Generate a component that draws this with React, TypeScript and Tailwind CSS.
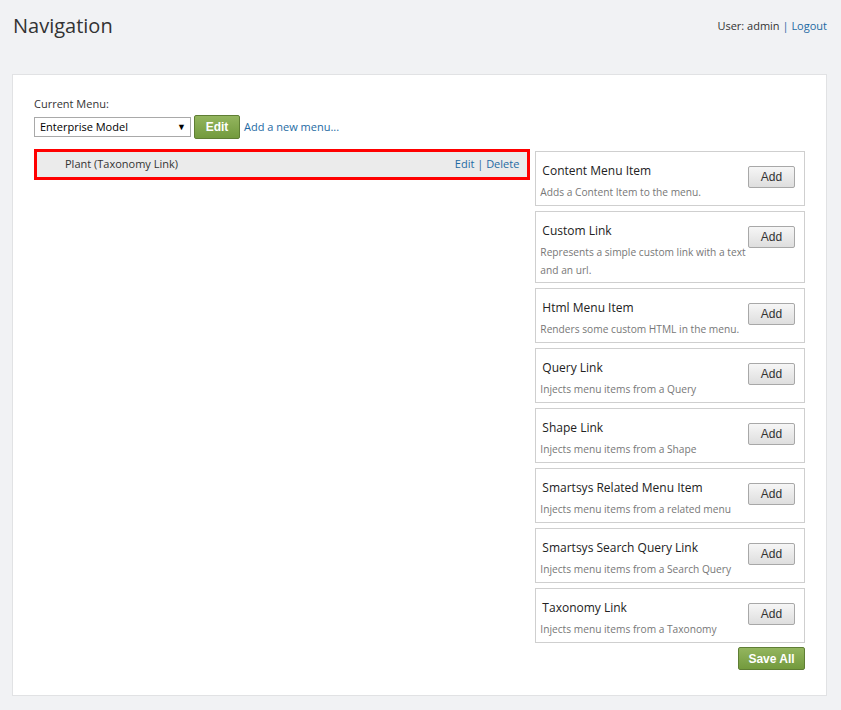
import React from "react";

const items = [
  { t: "Content Menu Item", d: "Adds a Content Item to the menu." },
  { t: "Custom Link", d: "Represents a simple custom link with a text and an url." },
  { t: "Html Menu Item", d: "Renders some custom HTML in the menu." },
  { t: "Query Link", d: "Injects menu items from a Query" },
  { t: "Shape Link", d: "Injects menu items from a Shape" },
  { t: "Smartsys Related Menu Item", d: "Injects menu items from a related menu" },
  { t: "Smartsys Search Query Link", d: "Injects menu items from a Search Query" },
  { t: "Taxonomy Link", d: "Injects menu items from a Taxonomy" },
];

export default function App() {
  return (
    <div className="w-[841px] h-[710px] bg-[#f1f2f4] text-[#333] overflow-hidden" style={{ fontFamily: '"Open Sans", "Noto Sans", sans-serif' }}>
      <div className="flex justify-between items-start pl-[13px] pr-[14px] pt-[11px] h-[74px]">
        <h1 className="text-[20px] leading-[30px] text-[#333]">Navigation</h1>
        <div className="text-[11px] mt-[7px] leading-[16px]">
          User: admin <span className="text-[#1e6aa3]">|</span> <span className="text-[#1e6aa3]">Logout</span>
        </div>
      </div>
      <div className="mx-[12px] mr-[14px] h-[622px] bg-white border border-[#e1e2e4] pl-[21px] pr-[21px] pt-[21px]">
        <div className="text-[11px] leading-[16px] text-[#333]">Current Menu:</div>
        <div className="flex items-center mt-[3px] h-[24px]">
          <div className="w-[157px] h-[20px] border border-[#a9a9a9] flex items-center justify-between pl-[5px] pr-[4px] text-[11px] text-black">
            <span>Enterprise Model</span>
            <span className="text-[9px]">▼</span>
          </div>
          <div className="ml-[3px] w-[46px] h-[24px] rounded-[2px] border border-[#5f7e34] bg-gradient-to-b from-[#93b55e] to-[#739a3d] text-white text-[12px] font-bold flex items-center justify-center" style={{ fontFamily: '"Liberation Sans", Arial, sans-serif' }}>Edit</div>
          <span className="ml-[4px] text-[11px] text-[#1e6aa3]">Add a new menu...</span>
        </div>
        <div className="flex mt-[10px] gap-[5px]">
          <div className="w-[497px]">
            <div className="h-[31px] border-[3px] border-[#ff0000] bg-[#ebebeb] flex items-center justify-between pl-[28px] pr-[8px] text-[11px]">
              <span className="text-[#333]">Plant (Taxonomy Link)</span>
              <span className="text-[#1e6aa3]">Edit <span>|</span> Delete</span>
            </div>
          </div>
          <div className="w-[270px] mt-[2px] flex flex-col gap-[5px]">
            {items.map((it) => (
              <div key={it.t} className="border border-[#cfcfcf] bg-white flex justify-between pl-[4px] pr-[9px] pt-[9px] pb-[3px] min-h-[55px]">
                <div className="flex-1 pr-[1px]">
                  <div className="text-[12px] leading-[20px] text-[#222] pl-[2px]">{it.t}</div>
                  <div className="text-[10.2px] leading-[18px] text-[#777] mt-[2px]">{it.d}</div>
                </div>
                <div className="pt-[5px] shrink-0">
                  <div className="w-[47px] h-[22px] border border-[#a8a8a8] rounded-[2px] bg-gradient-to-b from-[#f6f6f6] to-[#dedede] text-[12px] text-[#333] flex items-center justify-center" style={{ fontFamily: '"Liberation Sans", Arial, sans-serif' }}>Add</div>
                </div>
              </div>
            ))}
            <div className="flex justify-end -mt-[1px]">
              <div className="w-[67px] h-[23px] rounded-[2px] border border-[#5f7e34] bg-gradient-to-b from-[#93b55e] to-[#739a3d] text-white text-[12px] font-bold flex items-center justify-center" style={{ fontFamily: '"Liberation Sans", Arial, sans-serif' }}>Save All</div>
            </div>
          </div>
        </div>
      </div>
    </div>
  );
}
